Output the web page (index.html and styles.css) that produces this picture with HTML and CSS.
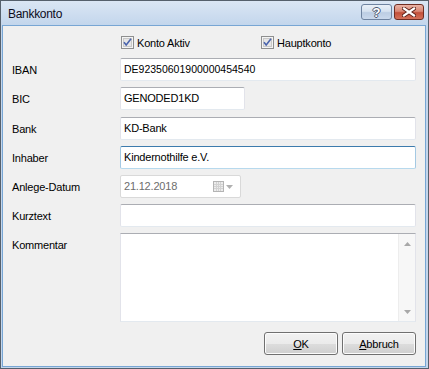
FILE: index.html
```html
<!DOCTYPE html>
<html lang="de">
<head>
<meta charset="utf-8">
<title>Bankkonto</title>
<link rel="stylesheet" href="styles.css">
</head>
<body>
<div class="window">
  <div class="titlebar">
    <span class="title">Bankkonto</span>
    <div class="tb-buttons">
      <div class="tb-btn tb-help">?</div>
      <div class="tb-btn tb-close">
        <svg width="14" height="10" viewBox="0 0 14 10">
          <path d="M2 1.5 L12 8.5 M12 1.5 L2 8.5" stroke="#5a2018" stroke-width="4" stroke-linecap="square"/>
          <path d="M2 1.5 L12 8.5 M12 1.5 L2 8.5" stroke="#ffffff" stroke-width="2.2" stroke-linecap="square"/>
        </svg>
      </div>
    </div>
  </div>
  <div class="client">
    <div class="form">
      <div class="row row-checks">
        <span class="label"></span>
        <div class="checks">
          <label class="check check-first">
            <svg class="cb" width="13" height="13" viewBox="0 0 13 13">
              <rect x="0.5" y="0.5" width="12" height="12" fill="#f4f4f4" stroke="#8e8f8f"/>
              <rect x="2.5" y="2.5" width="8" height="8" fill="#e6e6e6" stroke="#c8c8c8"/>
              <path d="M3 6.2 L5.2 9 L10 2.8" fill="none" stroke="#4a64ad" stroke-width="1.6"/>
            </svg>
            <span>Konto Aktiv</span>
          </label>
          <label class="check">
            <svg class="cb" width="13" height="13" viewBox="0 0 13 13">
              <rect x="0.5" y="0.5" width="12" height="12" fill="#f4f4f4" stroke="#8e8f8f"/>
              <rect x="2.5" y="2.5" width="8" height="8" fill="#e6e6e6" stroke="#c8c8c8"/>
              <path d="M3 6.2 L5.2 9 L10 2.8" fill="none" stroke="#4a64ad" stroke-width="1.6"/>
            </svg>
            <span>Hauptkonto</span>
          </label>
        </div>
      </div>
      <div class="row">
        <span class="label">IBAN</span>
        <div class="field field-digits">DE92350601900000454540</div>
      </div>
      <div class="row">
        <span class="label">BIC</span>
        <div class="field field-bic">GENODED1KD</div>
      </div>
      <div class="row row-bank">
        <span class="label">Bank</span>
        <div class="field">KD-Bank</div>
      </div>
      <div class="row">
        <span class="label">Inhaber</span>
        <div class="field field-focus">Kindernothilfe e.V.</div>
      </div>
      <div class="row">
        <span class="label">Anlege-Datum</span>
        <div class="field field-date">
          <span class="date-text">21.12.2018</span>
          <span class="date-icons">
            <svg width="11" height="11" viewBox="0 0 11 11">
              <rect x="0.5" y="0.5" width="10" height="10" fill="#ececec" stroke="#b4b4b4"/>
              <path d="M3.5 1 V10 M5.5 1 V10 M7.5 1 V10 M1 3.5 H10 M1 5.5 H10 M1 7.5 H10" stroke="#d2d2d2"/>
            </svg>
            <svg width="7" height="4" viewBox="0 0 7 4"><path d="M0 0 H7 L3.5 4 Z" fill="#b0b0b0"/></svg>
          </span>
        </div>
      </div>
      <div class="row">
        <span class="label">Kurztext</span>
        <div class="field"></div>
      </div>
      <div class="row row-memo">
        <span class="label">Kommentar</span>
        <div class="memo">
          <div class="memo-text"></div>
          <div class="scrollbar">
            <svg width="7" height="4" viewBox="0 0 7 4"><path d="M0 4 H7 L3.5 0 Z" fill="#a8a8a8"/></svg>
            <svg width="7" height="4" viewBox="0 0 7 4"><path d="M0 0 H7 L3.5 4 Z" fill="#a8a8a8"/></svg>
          </div>
        </div>
      </div>
    </div>
    <div class="actions">
      <button class="btn"><u>O</u>K</button>
      <button class="btn"><u>A</u>bbruch</button>
    </div>
  </div>
</div>
</body>
</html>
```

FILE: styles.css
```css
html, body {
  margin: 0;
  padding: 0;
  background: #ffffff;
}

body {
  font-family: "Liberation Sans", Arial, sans-serif;
  font-size: 11px;
  letter-spacing: -0.2px;
  color: #000000;
}

.window {
  width: 429px;
  height: 369px;
  box-sizing: border-box;
  border: 1px solid #55606c;
  background: #c3d6ec;
  display: flex;
  flex-direction: column;
}

.titlebar {
  height: 24px;
  flex: none;
  display: flex;
  align-items: flex-start;
  justify-content: space-between;
  background: linear-gradient(#dae6f4, #c3d6ec);
}

.title {
  font-size: 12px;
  letter-spacing: -0.3px;
  padding-left: 7px;
  padding-top: 6px;
  color: #0c0c1c;
  line-height: 14px;
}

.tb-buttons {
  display: flex;
  gap: 2px;
  padding-top: 3px;
  padding-right: 4px;
}

.tb-btn {
  height: 16px;
  border-radius: 3px;
  display: flex;
  align-items: center;
  justify-content: center;
  box-sizing: border-box;
}

.tb-help {
  width: 31px;
  border: 1px solid #6e83a0;
  background: linear-gradient(#e9f0f8 0%, #d6e2f0 45%, #bccde3 55%, #cad9ec 100%);
  color: #ffffff;
  font-weight: bold;
  font-size: 13px;
  letter-spacing: 0;
  text-shadow: 1px 0 0 #4a5870, -1px 0 0 #4a5870, 0 1px 0 #4a5870, 0 -1px 0 #4a5870;
}

.tb-close {
  width: 30px;
  border: 1px solid #6f2d22;
  background: linear-gradient(#eab3a6 0%, #d98774 45%, #c2503a 55%, #d4715a 100%);
}

.client {
  flex: 1;
  margin: 0 2px 1px 1px;
  border: 1px solid #78a6d4;
  background: #f0f0f0;
  padding: 10px 9px 10px 9px;
  display: flex;
  flex-direction: column;
}

.form {
  display: flex;
  flex-direction: column;
  gap: 6px;
}

.row {
  display: flex;
  align-items: center;
}

.row-checks {
  height: 13px;
  margin-bottom: 3px;
}

.row-bank {
  margin-top: 1px;
}

.row-memo {
  align-items: flex-start;
}

.label {
  width: 108px;
  flex: none;
}

.row-memo .label {
  padding-top: 6px;
}

.checks {
  display: flex;
  align-items: center;
}

.check {
  display: flex;
  align-items: center;
  gap: 3px;
  margin-left: 1px;
}

.check-first {
  width: 139px;
}

.cb {
  display: block;
}

.field {
  width: 296px;
  height: 23px;
  box-sizing: border-box;
  background: #ffffff;
  border: 1px solid #e2e3ea;
  border-top-color: #abadb3;
  border-bottom-color: #e3e9ef;
  border-radius: 2px;
  padding: 0 3px;
  line-height: 21px;
  white-space: nowrap;
}

.field-digits {
  font-size: 10.5px;
  letter-spacing: 0;
}

.field-bic {
  width: 125px;
}

.field-focus {
  border-color: #a4c9e3;
  border-top-color: #3d7bad;
  border-bottom-color: #b7d9ed;
}

.field-date {
  width: 121px;
  border: 1px solid #d9d9d9;
  color: #6d6d6d;
  display: flex;
  align-items: center;
  justify-content: space-between;
  padding-right: 7px;
}

.date-text {
  letter-spacing: -0.2px;
}

.date-icons {
  display: flex;
  align-items: center;
  gap: 2px;
}

.memo {
  width: 296px;
  height: 89px;
  box-sizing: border-box;
  background: #ffffff;
  border: 1px solid #e2e3ea;
  border-top-color: #abadb3;
  border-bottom-color: #e3e9ef;
  display: flex;
}

.memo-text {
  flex: 1;
}

.scrollbar {
  width: 17px;
  background: #f7f7f7;
  border-left: 1px solid #ededed;
  display: flex;
  flex-direction: column;
  align-items: center;
  justify-content: space-between;
  padding: 8px 0 7px;
  box-sizing: border-box;
}

.scrollbar svg {
  display: block;
}

.actions {
  margin-top: 10px;
  display: flex;
  justify-content: flex-end;
  gap: 4px;
}

.btn {
  width: 74px;
  height: 23px;
  box-sizing: border-box;
  border: 1px solid #707070;
  border-radius: 3px;
  background: linear-gradient(#f2f2f2 0%, #ebebeb 50%, #dddddd 51%, #cfcfcf 100%);
  box-shadow: inset 0 0 0 1px #fcfcfc;
  font-family: "Liberation Sans", Arial, sans-serif;
  font-size: 11px;
  letter-spacing: -0.2px;
  color: #000000;
  padding: 0;
}

.btn u {
  text-decoration: underline;
}
```
